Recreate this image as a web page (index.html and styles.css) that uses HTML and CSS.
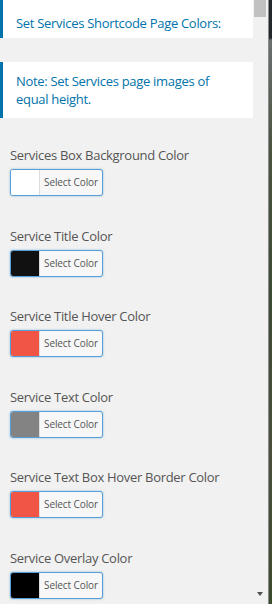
FILE: index.html
```html
<!DOCTYPE html>
<html lang="en">
<head>
    <meta charset="UTF-8">
    <meta name="viewport" content="width=device-width, initial-scale=1.0">
    <title>Services Colors</title>
    <link rel="stylesheet" href="styles.css">
</head>
<body>
    <div class="panel">
        <div class="notice notice-first">Set Services Shortcode Page Colors:</div>
        <div class="notice">Note: Set Services page images of equal height.</div>

        <div class="control">
            <label>Services Box Background Color</label>
            <button class="color-btn"><span class="swatch" style="background:#ffffff"></span><span class="btn-text">Select Color</span></button>
        </div>
        <div class="control">
            <label>Service Title Color</label>
            <button class="color-btn"><span class="swatch" style="background:#111111"></span><span class="btn-text">Select Color</span></button>
        </div>
        <div class="control">
            <label>Service Title Hover Color</label>
            <button class="color-btn"><span class="swatch" style="background:#f05545"></span><span class="btn-text">Select Color</span></button>
        </div>
        <div class="control">
            <label>Service Text Color</label>
            <button class="color-btn"><span class="swatch" style="background:#838383"></span><span class="btn-text">Select Color</span></button>
        </div>
        <div class="control">
            <label>Service Text Box Hover Border Color</label>
            <button class="color-btn"><span class="swatch" style="background:#f05545"></span><span class="btn-text">Select Color</span></button>
        </div>
        <div class="control">
            <label>Service Overlay Color</label>
            <button class="color-btn"><span class="swatch" style="background:#000000"></span><span class="btn-text">Select Color</span></button>
        </div>
    </div>

    <div class="scrollbar">
        <div class="thumb"></div>
        <div class="arrow"></div>
    </div>
    <div class="backdrop"></div>
</body>
</html>
```

FILE: styles.css
```css
html, body { margin: 0; height: 100%; overflow: hidden; }
body { display: flex; font-family: "Open Sans", "Noto Sans", sans-serif; background: #f1f1f1; }

.panel { width: 253px; flex: none; background: #f1f1f1; }

.notice { background: #fff; border-left: 3px solid #0073aa; color: #0073aa; font-size: 13px; letter-spacing: -0.3px; line-height: 18px; padding: 10px 12px 10px 13px; margin-bottom: 24px; }
.notice-first { padding-top: 14px; padding-bottom: 6px; }
.notice + .notice { margin-bottom: 28px; }

.control { padding: 0 10px; height: 80.5px; }
label { display: block; color: #555; font-size: 13px; letter-spacing: -0.3px; line-height: 18px; margin: 0 0 5px; }

.color-btn { display: flex; width: 93px; height: 27px; padding: 0; border: 1px solid #5b9dd9; border-radius: 3px; background: #f7f7f7; box-shadow: 0 0 2px rgba(30,140,190,.6); overflow: hidden; font-family: inherit; cursor: pointer; }
.swatch { width: 28px; height: 100%; border-right: 1px solid #ddd; }
.btn-text { flex: 1; font-size: 10px; letter-spacing: -0.1px; color: #555; line-height: 25px; text-align: center; }

.scrollbar { width: 15px; flex: none; background: #f1f1f1; display: flex; flex-direction: column; justify-content: space-between; }
.thumb { height: 17px; margin-left: 1px; width: 12px; background: #c1c1c1; }
.arrow { width: 0; height: 0; margin: 0 0 8px 4px; border-left: 3px solid transparent; border-right: 3px solid transparent; border-top: 4px solid #505050; }

.backdrop { flex: 1; background: linear-gradient(#23282d 0, #23282d 38px, #6b6f70 40px, #4a5440 150px, #3d4a35 300px, #4a4f3d 450px, #3c4a2e 604px); border-left: 1px solid #8a8a8a; }
```
